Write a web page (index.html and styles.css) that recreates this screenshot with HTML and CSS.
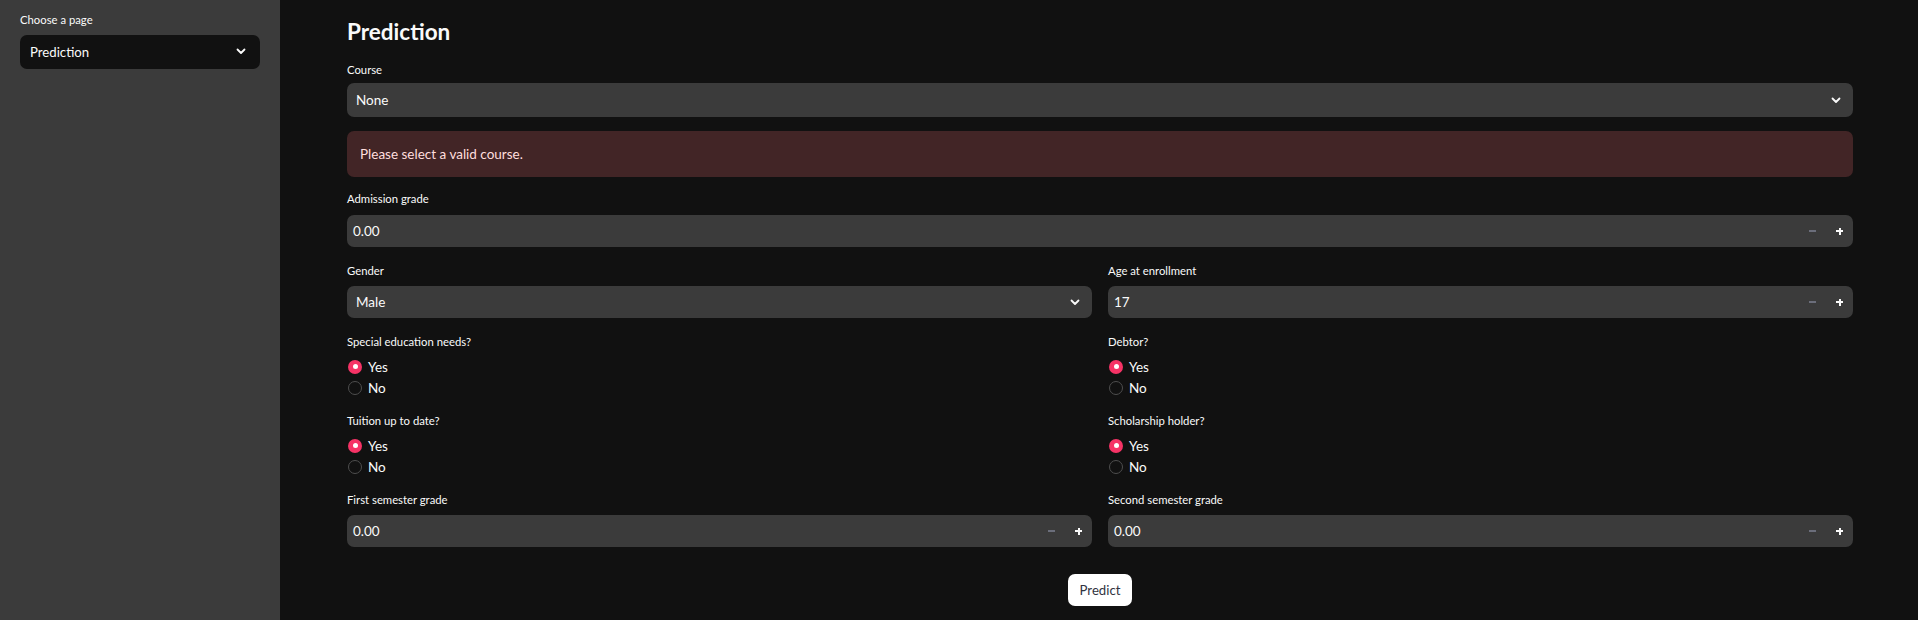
FILE: index.html
```html
<!DOCTYPE html>
<html lang="en">
<head>
<meta charset="utf-8">
<title>Prediction</title>
<link rel="stylesheet" href="styles.css">
</head>
<body>
<div class="app">
  <aside class="sidebar">
    <div class="label">Choose a page</div>
    <div class="select select-side">
      <span>Prediction</span>
      <svg class="chev" width="10" height="7" viewBox="0 0 10 7"><path d="M1.5 1.5 L5 5 L8.5 1.5" fill="none" stroke="#fafafa" stroke-width="1.8" stroke-linecap="round" stroke-linejoin="round"/></svg>
    </div>
  </aside>
  <main class="main">
    <h1 class="title">Prediction</h1>

    <div class="label label-tight">Course</div>
    <div class="select select-main gap-after">
      <span>None</span>
      <svg class="chev" width="10" height="7" viewBox="0 0 10 7"><path d="M1.5 1.5 L5 5 L8.5 1.5" fill="none" stroke="#fafafa" stroke-width="1.8" stroke-linecap="round" stroke-linejoin="round"/></svg>
    </div>

    <div class="alert">Please select a valid course.</div>

    <div class="label label-7">Admission grade</div>
    <div class="number gap-15">
      <span class="num-val">0.00</span>
      <span class="steps"><span class="minus"></span><span class="plus"></span></span>
    </div>

    <div class="row gap-15">
      <div class="col">
        <div class="label">Gender</div>
        <div class="select select-main">
          <span>Male</span>
          <svg class="chev" width="10" height="7" viewBox="0 0 10 7"><path d="M1.5 1.5 L5 5 L8.5 1.5" fill="none" stroke="#fafafa" stroke-width="1.8" stroke-linecap="round" stroke-linejoin="round"/></svg>
        </div>
      </div>
      <div class="col">
        <div class="label">Age at enrollment</div>
        <div class="number">
          <span class="num-val">17</span>
          <span class="steps"><span class="minus"></span><span class="plus"></span></span>
        </div>
      </div>
    </div>

    <div class="row gap-14">
      <div class="col">
        <div class="label label-5">Special education needs?</div>
        <div class="radio"><span class="dot on"></span>Yes</div>
        <div class="radio"><span class="dot"></span>No</div>
      </div>
      <div class="col">
        <div class="label label-5">Debtor?</div>
        <div class="radio"><span class="dot on"></span>Yes</div>
        <div class="radio"><span class="dot"></span>No</div>
      </div>
    </div>

    <div class="row gap-14">
      <div class="col">
        <div class="label label-5">Tuition up to date?</div>
        <div class="radio"><span class="dot on"></span>Yes</div>
        <div class="radio"><span class="dot"></span>No</div>
      </div>
      <div class="col">
        <div class="label label-5">Scholarship holder?</div>
        <div class="radio"><span class="dot on"></span>Yes</div>
        <div class="radio"><span class="dot"></span>No</div>
      </div>
    </div>

    <div class="row gap-27">
      <div class="col">
        <div class="label">First semester grade</div>
        <div class="number">
          <span class="num-val">0.00</span>
          <span class="steps"><span class="minus"></span><span class="plus"></span></span>
        </div>
      </div>
      <div class="col">
        <div class="label">Second semester grade</div>
        <div class="number">
          <span class="num-val">0.00</span>
          <span class="steps"><span class="minus"></span><span class="plus"></span></span>
        </div>
      </div>
    </div>

    <div class="btn-wrap"><button class="btn">Predict</button></div>
  </main>
</div>
</body>
</html>
```

FILE: styles.css
```css
* { box-sizing: border-box; }
html, body {
  margin: 0;
  padding: 0;
  height: 100%;
  background: #111111;
  color: #fafafa;
  font-family: "Lato", "Noto Sans", sans-serif;
}
.app {
  display: flex;
  min-height: 620px;
}
.sidebar {
  width: 280px;
  flex: none;
  background: #3b3b3b;
  padding: 11px 20px 0 20px;
}
.main {
  flex: 1;
  padding: 17px 65px 0 67px;
  display: flex;
  flex-direction: column;
}
.title {
  margin: 0 0 14px 0;
  font-size: 22.5px;
  line-height: 30px;
  height: 30px;
  font-weight: 700;
}
.label {
  font-size: 11.3px;
  line-height: 18px;
  height: 18px;
  margin-bottom: 6px;
  color: #fafafa;
}
.label-tight { margin-bottom: 4px; }
.label-7 { margin-bottom: 7px; }
.label-5 { margin-bottom: 5px; }

.select {
  display: flex;
  align-items: center;
  justify-content: space-between;
  border-radius: 7px;
  font-size: 13.5px;
}
.select-side {
  height: 34px;
  background: #111111;
  padding: 0 14px 1px 10px;
  font-size: 13.2px;
}
.select-main {
  height: 32px;
  background: #3b3b3b;
  padding: 0 12px 0 9px;
}
.gap-after { height: 34px; margin-bottom: 14px; }
.chev { display: block; }

.alert {
  height: 46px;
  background: #422526;
  border-radius: 7px;
  color: #ffdede;
  font-size: 13.5px;
  display: flex;
  align-items: center;
  padding-left: 13px;
  margin-bottom: 13px;
}

.number {
  height: 32px;
  background: #3b3b3b;
  border-radius: 7px;
  display: flex;
  align-items: center;
  justify-content: space-between;
  padding: 0 0 0 6px;
  font-size: 13.5px;
}
.steps {
  display: flex;
  align-items: center;
  height: 100%;
}
.minus, .plus {
  position: relative;
  width: 27px;
  height: 100%;
  display: block;
}
.minus::before {
  content: "";
  position: absolute;
  left: 10px;
  top: 15px;
  width: 7px;
  height: 2px;
  background: #6b6e7b;
}
.plus::before, .plus::after {
  content: "";
  position: absolute;
  background: #fafafa;
}
.plus::before { left: 10px; top: 15px; width: 7px; height: 2px; }
.plus::after { left: 12.5px; top: 12.5px; width: 2px; height: 7px; }

.row {
  display: grid;
  grid-template-columns: 1fr 1fr;
  column-gap: 16px;
}
.gap-15 { margin-bottom: 15px; }
.gap-14 { margin-bottom: 14px; }
.gap-27 { margin-bottom: 27px; }

.radio {
  height: 21px;
  display: flex;
  align-items: center;
  font-size: 13.5px;
  padding-left: 1px;
}
.dot {
  width: 14px;
  height: 14px;
  border-radius: 50%;
  border: 1.5px solid #4e4e4e;
  background: #111111;
  margin-right: 6px;
  position: relative;
  flex: none;
}
.dot.on {
  border: none;
  background: #f63366;
}
.dot.on::after {
  content: "";
  position: absolute;
  left: 4.5px;
  top: 4.5px;
  width: 5px;
  height: 5px;
  border-radius: 50%;
  background: #ffffff;
}

.btn-wrap {
  display: flex;
  justify-content: center;
}
.btn {
  height: 32px;
  padding: 0 11.5px;
  background: #ffffff;
  color: #31333f;
  border: none;
  border-radius: 7px;
  font-family: inherit;
  font-size: 13.2px;
}
```
